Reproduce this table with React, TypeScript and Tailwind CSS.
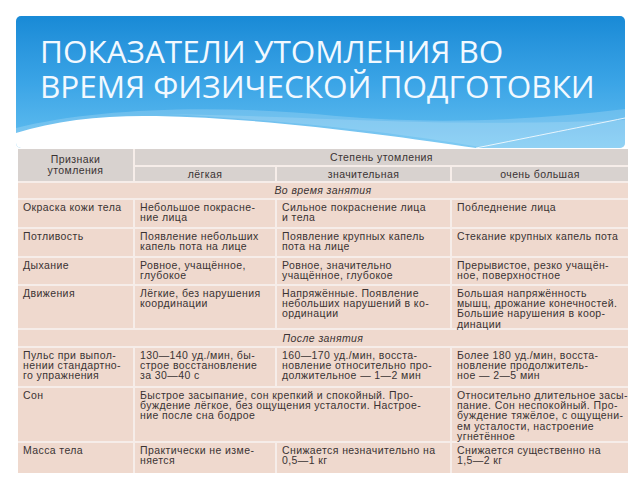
import React from "react";

const F = { fontFamily: '"Liberation Sans", Arial, sans-serif' };

function Lines({ t }: { t: string }) {
  return (
    <>
      {t.split("|").map((l, i) => (
        <div key={i} className="whitespace-nowrap">{l}</div>
      ))}
    </>
  );
}

function Cell({ t, className = "" }: { t: string; className?: string }) {
  return (
    <div className={"bg-[#efd9ce] pl-[5px] pt-[2px] " + className}>
      <Lines t={t} />
    </div>
  );
}

type Row = [string, string, string, string];

const rowsA: Row[] = [
  ["Окраска кожи тела", "Небольшое покрасне-|ние лица", "Сильное покраснение лица|и тела", "Побледнение лица"],
  ["Потливость", "Появление небольших|капель пота на лице", "Появление крупных капель|пота на лице", "Стекание крупных капель пота"],
  ["Дыхание", "Ровное, учащённое,|глубокое", "Ровное, значительно|учащённое, глубокое", "Прерывистое, резко учащён-|ное, поверхностное"],
  ["Движения", "Лёгкие, без нарушения|координации", "Напряжённые. Появление|небольших нарушений в ко-|ординации", "Большая напряжённость|мышц, дрожание конечностей.|Большие нарушения в коор-|динации"],
];

export default function App() {
  return (
    <div className="w-[640px] h-[480px] bg-white overflow-hidden pt-[16px]">
      <div className="relative ml-[16px] w-[609px] h-[132px] rounded-[5px] overflow-hidden bg-gradient-to-b from-[#188ad6] via-[#3aa4e6] to-[#62bff0]">
        <div
          className="pl-[24px] pt-[17px] text-[31.5px] leading-[35px] text-[#f2f9ff]"
          style={{ fontFamily: '"Open Sans", "Noto Sans", sans-serif' }}
        >
          <div>ПОКАЗАТЕЛИ УТОМЛЕНИЯ ВО</div>
          <div>ВРЕМЯ ФИЗИЧЕСКОЙ ПОДГОТОВКИ</div>
        </div>
        <svg className="absolute left-0 bottom-0" width="609" height="42" viewBox="0 0 609 42">
          <path d="M0,22 C80,2 200,-2 320,10 C420,19 520,14 609,3 L609,42 L0,42 Z" fill="#ffffff" fillOpacity="0.18" />
          <path d="M150,8 C300,10 420,22 609,14 L609,42 L470,42 C400,30 300,16 150,8 Z" fill="#ffffff" fillOpacity="0.15" />
          <path d="M460,42 C520,30 570,20 609,12" stroke="#ffffff" strokeOpacity="0.8" strokeWidth="1" fill="none" />
          <path d="M0,27 C40,14 90,9 140,10 C250,12 380,30 460,42 L0,42 Z" fill="#ffffff" />
        </svg>
      </div>

      <div
        className="ml-[18px] mt-[1px] w-[610px] grid grid-cols-[115px_140px_173px_176px] grid-rows-[16px_14px_15px_27px_27px_26px_42px_16px_38px_53px_30px] gap-[2px] bg-[#f6ede9] text-[10.5px] leading-[10.2px] tracking-[0.4px] text-[#3a3333]"
        style={F}
      >
        <div className="row-span-2 bg-[#d8d2cf] flex flex-col items-center justify-center leading-[11px]">
          <div>Признаки</div>
          <div>утомления</div>
        </div>
        <div className="col-span-3 bg-[#d8d2cf] flex items-center justify-center">Степень утомления</div>
        <div className="bg-[#d8d2cf] flex items-center justify-center">лёгкая</div>
        <div className="bg-[#d8d2cf] flex items-center justify-center">значительная</div>
        <div className="bg-[#d8d2cf] flex items-center justify-center">очень большая</div>

        <div className="col-span-4 bg-[#efd9ce] flex items-center justify-center italic">Во время занятия</div>

        {rowsA.map((r, i) => (
          <React.Fragment key={i}>
            <Cell t={r[0]} />
            <Cell t={r[1]} />
            <Cell t={r[2]} />
            <Cell t={r[3]} />
          </React.Fragment>
        ))}

        <div className="col-span-4 bg-[#efd9ce] flex items-center justify-center italic">После занятия</div>

        <Cell t="Пульс при выпол-|нении стандартно-|го упражнения" />
        <Cell t="130—140 уд./мин, бы-|строе восстановление|за 30—40 с" />
        <Cell t="160—170 уд./мин, восста-|новление относительно про-|должительное — 1—2 мин" />
        <Cell t="Более 180 уд./мин, восста-|новление продолжитель-|ное — 2—5 мин" />

        <Cell t="Сон" />
        <Cell className="col-span-2" t="Быстрое засыпание, сон крепкий и спокойный. Про-|буждение лёгкое, без ощущения усталости. Настрое-|ние после сна бодрое" />
        <Cell t="Относительно длительное засы-|пание. Сон неспокойный. Про-|буждение тяжёлое, с ощущени-|ем усталости, настроение|угнетённое" />

        <Cell t="Масса тела" />
        <Cell t="Практически не изме-|няется" />
        <Cell t="Снижается незначительно на|0,5—1 кг" />
        <Cell t="Снижается существенно на|1,5—2 кг" />
      </div>
    </div>
  );
}
